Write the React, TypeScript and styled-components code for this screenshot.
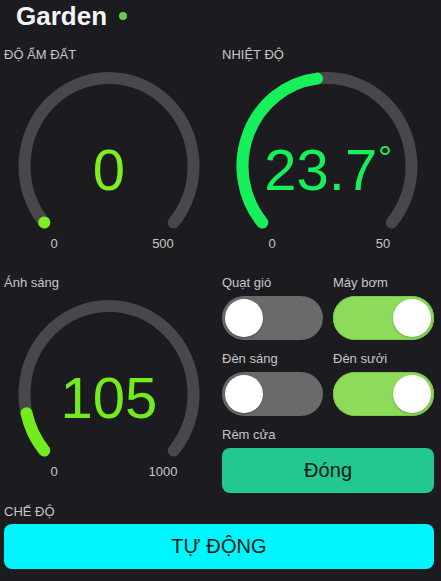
import React from "react";
import styled, { createGlobalStyle } from "styled-components";

const Global = createGlobalStyle`
  html, body { margin: 0; padding: 0; background: #1c1c20; }
  body { font-family: "Liberation Sans", Arial, sans-serif; color: #c9c9c9; }
  * { box-sizing: border-box; }
`;

const Screen = styled.div`
  width: 441px;
  height: 581px;
  background: #1c1c20;
  overflow: hidden;
  padding: 0 7px 0 4px;
`;

const Header = styled.div`
  height: 32px;
  display: flex;
  align-items: center;
  gap: 12px;
  padding-left: 12px;
`;

const Title = styled.h1`
  margin: 0;
  font-size: 26px;
  line-height: 32px;
  font-weight: 700;
  color: #f4f4f4;
`;

const StatusDot = styled.span`
  width: 8px;
  height: 8px;
  border-radius: 50%;
  background: #62d04a;
  margin-top: -1px;
`;

const Row = styled.div<{ $top: number }>`
  display: grid;
  grid-template-columns: 210px 212px;
  column-gap: 8px;
  margin-top: ${(p) => p.$top}px;
  align-items: start;
`;

const Label = styled.div<{ $mb?: number }>`
  font-size: 13px;
  line-height: 16px;
  height: 16px;
  color: #c6c6c6;
  white-space: nowrap;
  margin-bottom: ${(p) => (p.$mb ?? 5)}px;
`;

const GaugeCell = styled.div`
  display: flex;
  flex-direction: column;
`;

const GaugeBody = styled.div`
  position: relative;
  height: 165px;
  margin-top: -1px;
`;

const GaugeSvg = styled.svg`
  display: block;
  width: 100%;
  height: 165px;
`;

const Value = styled.div<{ $color: string; $top: number }>`
  position: absolute;
  left: 50%;
  top: ${(p) => p.$top}px;
  transform: translate(-50%, -50%);
  font-size: 58px;
  line-height: 1;
  color: ${(p) => p.$color};
  white-space: nowrap;
`;

const Degree = styled.span`
  font-size: 34px;
  vertical-align: top;
  position: relative;
  top: -1px;
  margin-left: 1px;
`;

const Scale = styled.div<{ $left: number; $right: number }>`
  display: flex;
  justify-content: space-between;
  margin-top: 5px;
  padding-left: ${(p) => p.$left}px;
  padding-right: ${(p) => p.$right}px;
`;

const ScaleText = styled.span`
  width: 44px;
  text-align: center;
  font-size: 13px;
  line-height: 16px;
  color: #c6c6c6;
`;

const Controls = styled.div`
  display: flex;
  flex-direction: column;
  gap: 11px;
`;

const SwitchGrid = styled.div`
  display: grid;
  grid-template-columns: 101px 101px;
  column-gap: 10px;
`;

const Field = styled.div`
  display: flex;
  flex-direction: column;
`;

const Track = styled.div<{ $on: boolean }>`
  width: 101px;
  height: 44px;
  border-radius: 22px;
  background: ${(p) => (p.$on ? "#8ddb5b" : "#6a6a6b")};
  box-shadow: ${(p) => (p.$on ? "inset 0 0 0 1px #79c94a" : "none")};
  display: flex;
  align-items: center;
  justify-content: ${(p) => (p.$on ? "flex-end" : "flex-start")};
  padding: 0 3px;
`;

const Knob = styled.div`
  width: 38px;
  height: 38px;
  border-radius: 50%;
  background: #ffffff;
  box-shadow: 0 1px 2px rgba(0, 0, 0, 0.25);
`;

const Button = styled.div<{ $bg: string; $h: number }>`
  height: ${(p) => p.$h}px;
  border-radius: 8px;
  background: ${(p) => p.$bg};
  display: flex;
  align-items: center;
  justify-content: center;
  font-size: 20px;
  color: #111816;
  letter-spacing: 0.1px;
`;

const Mode = styled.div`
  margin-top: 11px;
  display: flex;
  flex-direction: column;
`;

const CX = 105;
const CY = 100;
const RX = 84.5;
const RY = 88;
const SW = 12;
const HALF = 130;

function pt(angle: number) {
  const a = (angle * Math.PI) / 180;
  return { x: CX + RX * Math.sin(a), y: CY - RY * Math.cos(a) };
}

function arc(from: number, to: number) {
  const s = pt(from);
  const e = pt(to);
  const large = to - from > 180 ? 1 : 0;
  return `M ${s.x.toFixed(2)} ${s.y.toFixed(2)} A ${RX} ${RY} 0 ${large} 1 ${e.x.toFixed(2)} ${e.y.toFixed(2)}`;
}

type GaugeProps = {
  label: string;
  value: number;
  max: number;
  color: string;
  text: React.ReactNode;
};

function Gauge({ label, value, max, color, text }: GaugeProps) {
  const start = -HALF;
  const sweep = (value / max) * HALF * 2;
  const s = pt(start);
  return (
    <GaugeCell>
      <Label $mb={4}>{label}</Label>
      <GaugeBody>
        <GaugeSvg viewBox="0 0 210 165" preserveAspectRatio="xMinYMin meet">
          <path d={arc(start, HALF)} fill="none" stroke="#47474c" strokeWidth={SW} strokeLinecap="round" />
          {sweep > 0 ? (
            <path d={arc(start, start + sweep)} fill="none" stroke={color} strokeWidth={SW} strokeLinecap="round" />
          ) : (
            <circle cx={s.x} cy={s.y} r={SW / 2} fill={color} />
          )}
        </GaugeSvg>
        <Value $color={color} $top={104}>
          {text}
        </Value>
      </GaugeBody>
      <Scale $left={28} $right={29}>
        <ScaleText>0</ScaleText>
        <ScaleText>{max}</ScaleText>
      </Scale>
    </GaugeCell>
  );
}

function Toggle({ label, on }: { label: string; on: boolean }) {
  return (
    <Field>
      <Label>{label}</Label>
      <Track $on={on}>
        <Knob />
      </Track>
    </Field>
  );
}

export default function App() {
  return (
    <>
      <Global />
      <Screen>
        <Header>
          <Title>Garden</Title>
          <StatusDot />
        </Header>
        <Row $top={15}>
          <Gauge label="ĐỘ ẨM ĐẤT" value={0} max={500} color="#7cee22" text="0" />
          <Gauge label="NHIỆT ĐỘ" value={23.7} max={50} color="#16f05a" text={<>23.7<Degree>°</Degree></>} />
        </Row>
        <Row $top={23}>
          <Gauge label="Ánh sáng" value={105} max={1000} color="#72ec1c" text="105" />
          <Controls>
            <SwitchGrid>
              <Toggle label="Quạt gió" on={false} />
              <Toggle label="Máy bơm" on={true} />
            </SwitchGrid>
            <SwitchGrid>
              <Toggle label="Đèn sáng" on={false} />
              <Toggle label="Đèn sưởi" on={true} />
            </SwitchGrid>
            <Field>
              <Label>Rèm cửa</Label>
              <Button $bg="#22c890" $h={45}>Đóng</Button>
            </Field>
          </Controls>
        </Row>
        <Mode>
          <Label $mb={4}>CHẾ ĐỘ</Label>
          <Button $bg="#00f6fe" $h={45}>TỰ ĐỘNG</Button>
        </Mode>
      </Screen>
    </>
  );
}
